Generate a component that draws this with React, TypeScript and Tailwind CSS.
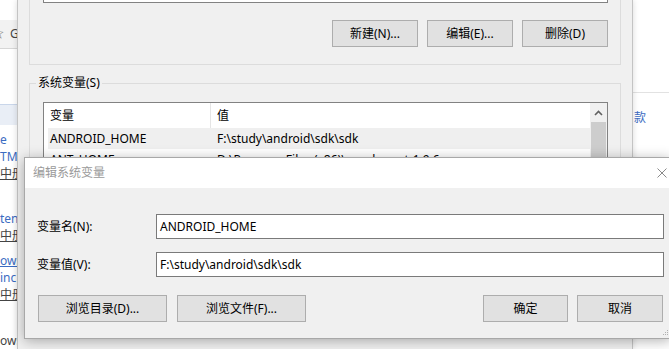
const ui = "font-['Noto_Sans','Noto_Sans_CJK_SC',sans-serif]"

function WinButton({ label, className = '' }: { label: string; className?: string }) {
  return (
    <div
      className={`flex h-[27px] shrink-0 items-center justify-center border border-[#adadad] bg-[#e1e1e1] text-[12px] text-black ${className}`}
    >
      {label}
    </div>
  )
}

function WinInput({ value }: { value: string }) {
  return (
    <div className="flex h-[25px] w-[508px] items-center border border-[#7a7a7a] bg-white pl-[3px] text-[12px] text-black">
      {value}
    </div>
  )
}

function PageBehind() {
  return (
    <div className="flex h-full w-full">
      <div className="flex w-[17px] shrink-0 flex-col overflow-hidden whitespace-nowrap text-[12px] leading-[17px]">
        <div className="mt-[20px] flex h-[30px] items-center border-b border-[#d6d6d6] bg-[#f2f2f2] text-[#777]">
          <span className="-ml-[8px]">☆</span>
          <span className="ml-[6px] text-[#444]">G</span>
        </div>
        <div className="mt-[55px] h-[22px] border-t border-[#c9d6ea] bg-[#e9eef6]" />
        <div className="mt-[6px] text-[#3b6cc2]">e</div>
        <div className="text-[#3b6cc2]">TM0</div>
        <div className="text-[#444] underline">中册</div>
        <div className="mt-[28px] text-[#3b6cc2]">ten</div>
        <div className="text-[#444] underline">中册</div>
        <div className="mt-[8px] text-[#3b6cc2] underline">ows</div>
        <div className="text-[#3b6cc2]">inc</div>
        <div className="text-[#444] underline">中册</div>
        <div className="mt-[29px] text-[#444]">ows</div>
      </div>
      <div className="flex-1" />
      <div className="w-[36px] shrink-0">
        <div className="mt-[92px] border-t border-[#e2e2e2] pl-[1px] pt-[16px] text-[12px] leading-[17px] text-[#3b6cc2]">
          款
        </div>
      </div>
    </div>
  )
}

function EnvWindow() {
  return (
    <div className="absolute left-[17px] top-0 h-[349px] w-[616px] overflow-hidden border-x border-[#c4c4c4] bg-[#f0f0f0] px-[11px] shadow-[0_0_6px_rgba(0,0,0,0.15)]">
      {/* user variables group, mostly scrolled off the top */}
      <div className="-mt-[10px] border border-[#dcdcdc] pb-[17px] pl-[13px] pr-[12px]">
        <div className="h-[12px] border border-t-0 border-[#828282] bg-white" />
        <div className="mt-[17px] flex justify-end gap-[9px]">
          <WinButton label="新建(N)..." className="w-[86px]" />
          <WinButton label="编辑(E)..." className="w-[86px]" />
          <WinButton label="删除(D)" className="w-[86px]" />
        </div>
      </div>

      <fieldset className="mt-[10px] h-[255px] border border-[#dcdcdc] px-0">
        <legend className="ml-[6px] px-[2px] text-[12px] leading-[16px] text-black">系统变量(S)</legend>
        <div className="pl-[13px] pr-[12px] pt-[11px]">
          <div className="flex h-[180px] border border-[#828282] bg-white text-[12px] text-black">
            <div className="flex flex-1 flex-col">
              <div className="flex h-[25px] items-center">
                <div className="flex h-full w-[167px] items-center border-r border-[#e5e5e5] pl-[6px]">变量</div>
                <div className="pl-[6px]">值</div>
              </div>
              <div className="ml-[4px] flex h-[21px] items-center bg-[#efefef]">
                <div className="w-[163px] pl-[2px]">ANDROID_HOME</div>
                <div className="pl-[6px]">F:\study\android\sdk\sdk</div>
              </div>
              <div className="ml-[4px] flex h-[21px] items-center">
                <div className="w-[163px] pl-[2px]">ANT_HOME</div>
                <div className="pl-[6px]">D:\Program Files (x86)\apache-ant-1.9.6</div>
              </div>
            </div>
            <div className="flex w-[17px] flex-col bg-[#f0f0f0]">
              <div className="flex h-[19px] items-center justify-center">
                <svg width="9" height="6" viewBox="0 0 9 6" fill="none">
                  <path d="M1 5 L4.5 1.5 L8 5" stroke="#606060" strokeWidth="1.6" />
                </svg>
              </div>
              <div className="mx-[1px] h-[80px] bg-[#cdcdcd]" />
            </div>
          </div>
        </div>
      </fieldset>
    </div>
  )
}

function EditDialog() {
  return (
    <div className="absolute left-[24px] top-[157px] flex h-[182px] w-[647px] flex-col border border-[#a8a8a8] bg-[#f0f0f0] shadow-[0_2px_12px_rgba(0,0,0,0.3)]">
      <div className="flex h-[30px] items-center justify-between bg-white pl-[8px] pr-[3px]">
        <span className="text-[12px] text-[#9a9a9a]">编辑系统变量</span>
        <svg width="10" height="10" viewBox="0 0 10 10" fill="none">
          <path d="M0.5 0.5 L9.5 9.5 M9.5 0.5 L0.5 9.5" stroke="#8a8a8a" strokeWidth="1" />
        </svg>
      </div>
      <div className="relative flex flex-1 flex-col pl-[12px] pr-[6px] pt-[26px] text-[12px] text-black">
        <div className="flex items-center">
          <div className="w-[119px]">变量名(N):</div>
          <WinInput value="ANDROID_HOME" />
        </div>
        <div className="mt-[13px] flex items-center">
          <div className="w-[119px]">变量值(V):</div>
          <WinInput value="F:\study\android\sdk\sdk" />
        </div>
        <div className="mt-[18px] flex items-center pl-[1px] pr-[1px]">
          <WinButton label="浏览目录(D)..." className="w-[129px]" />
          <WinButton label="浏览文件(F)..." className="ml-[10px] w-[129px]" />
          <div className="flex-1" />
          <WinButton label="确定" className="w-[85px]" />
          <WinButton label="取消" className="ml-[9px] w-[86px]" />
        </div>
        <svg className="absolute bottom-[2px] right-[1px]" width="6" height="6" viewBox="0 0 6 6">
          <rect x="4" y="0" width="1" height="1" fill="#b0b0b0" />
          <rect x="2" y="2" width="1" height="1" fill="#b0b0b0" />
          <rect x="4" y="2" width="1" height="1" fill="#b0b0b0" />
          <rect x="0" y="4" width="1" height="1" fill="#b0b0b0" />
          <rect x="2" y="4" width="1" height="1" fill="#b0b0b0" />
          <rect x="4" y="4" width="1" height="1" fill="#b0b0b0" />
        </svg>
      </div>
    </div>
  )
}

export default function App() {
  return (
    <div className={`relative h-[349px] w-[669px] overflow-hidden bg-white ${ui}`}>
      <PageBehind />
      <EnvWindow />
      <EditDialog />
    </div>
  )
}
